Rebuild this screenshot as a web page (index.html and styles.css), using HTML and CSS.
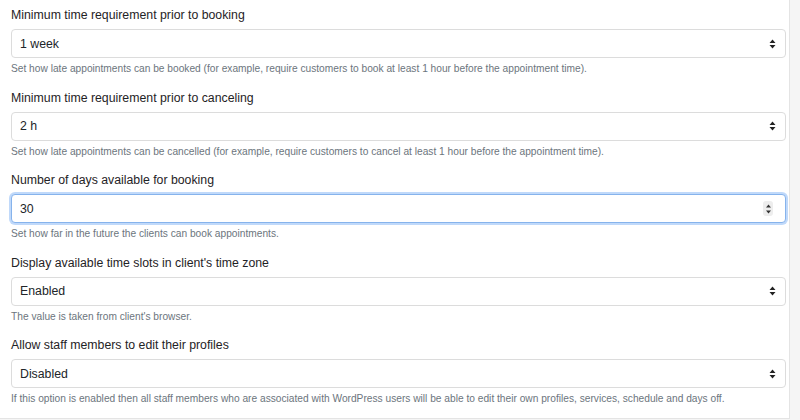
FILE: index.html
```html
<!DOCTYPE html>
<html>
<head>
<meta charset="utf-8">
<link rel="stylesheet" href="styles.css">
</head>
<body>
<div class="panel">
  <div class="group">
    <div class="label">Minimum time requirement prior to booking</div>
    <div class="field"><span class="value">1 week</span><svg class="arrows" width="7" height="10" viewBox="0 0 7 10"><path d="M3.5 0.5L6.5 4H0.5Z M3.5 9.5L6.5 6H0.5Z" fill="#222"/></svg></div>
    <div class="help">Set how late appointments can be booked (for example, require customers to book at least 1 hour before the appointment time).</div>
  </div>
  <div class="group">
    <div class="label">Minimum time requirement prior to canceling</div>
    <div class="field"><span class="value">2 h</span><svg class="arrows" width="7" height="10" viewBox="0 0 7 10"><path d="M3.5 0.5L6.5 4H0.5Z M3.5 9.5L6.5 6H0.5Z" fill="#222"/></svg></div>
    <div class="help">Set how late appointments can be cancelled (for example, require customers to cancel at least 1 hour before the appointment time).</div>
  </div>
  <div class="group">
    <div class="label">Number of days available for booking</div>
    <div class="field focus"><span class="value">30</span><span class="spin"><svg width="7" height="12" viewBox="0 0 7 12"><path d="M3.5 1.5L6 4.5H1Z M3.5 10.5L6 7.5H1Z" fill="#333"/></svg></span></div>
    <div class="help">Set how far in the future the clients can book appointments.</div>
  </div>
  <div class="group">
    <div class="label">Display available time slots in client's time zone</div>
    <div class="field"><span class="value">Enabled</span><svg class="arrows" width="7" height="10" viewBox="0 0 7 10"><path d="M3.5 0.5L6.5 4H0.5Z M3.5 9.5L6.5 6H0.5Z" fill="#222"/></svg></div>
    <div class="help">The value is taken from client's browser.</div>
  </div>
  <div class="group">
    <div class="label">Allow staff members to edit their profiles</div>
    <div class="field"><span class="value">Disabled</span><svg class="arrows" width="7" height="10" viewBox="0 0 7 10"><path d="M3.5 0.5L6.5 4H0.5Z M3.5 9.5L6.5 6H0.5Z" fill="#222"/></svg></div>
    <div class="help">If this option is enabled then all staff members who are associated with WordPress users will be able to edit their own profiles, services, schedule and days off.</div>
  </div>
</div>
</body>
</html>
```
FILE: styles.css
```css
html, body {
  margin: 0;
  padding: 0;
}
body {
  background: #f5f5f5;
  font-family: "Liberation Sans", Arial, Helvetica, sans-serif;
  color: #212529;
  width: 800px;
  height: 420px;
  overflow: hidden;
}
.panel {
  box-sizing: border-box;
  width: 791px;
  height: 419px;
  margin-left: -1px;
  background: #fff;
  border: 1px solid #e4e4e4;
  border-top: none;
  padding: 6px 4px 0 11px;
  display: flex;
  flex-direction: column;
  gap: 12.5px;
}
.group {
  display: flex;
  flex-direction: column;
}
.label {
  font-size: 12.3px;
  line-height: 18px;
  color: #1f2326;
}
.field {
  box-sizing: border-box;
  margin-top: 5px;
  height: 29px;
  width: 775px;
  border: 1px solid #dcdcdc;
  border-radius: 4px;
  background: #fff;
  display: flex;
  align-items: center;
  justify-content: space-between;
  padding: 0 9px 0 8px;
}
.value {
  font-size: 12.3px;
  color: #212529;
}
.arrows {
  display: block;
}
.focus {
  border-color: #86b3ec;
  box-shadow: 0 0 0 2px rgba(140, 185, 245, 0.55);
}
.spin {
  display: flex;
  align-items: center;
  justify-content: center;
  width: 10px;
  height: 15px;
  border-radius: 3px;
  background: #ededed;
  margin-right: 3px;
}
.spin svg {
  display: block;
}
.help {
  margin-top: 4px;
  font-size: 10.2px;
  line-height: 14px;
  color: #6c757d;
}
```
